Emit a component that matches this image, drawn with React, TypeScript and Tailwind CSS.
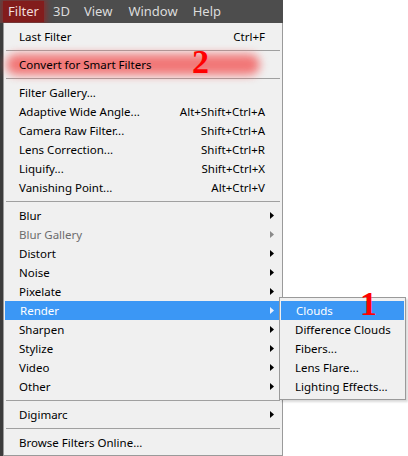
import React from "react";

type Item =
  | { sep: true }
  | { label: string; shortcut?: string; sub?: boolean; disabled?: boolean; active?: boolean; glow?: boolean };

const items: Item[] = [
  { label: "Last Filter", shortcut: "Ctrl+F" },
  { sep: true },
  { label: "Convert for Smart Filters", glow: true },
  { sep: true },
  { label: "Filter Gallery..." },
  { label: "Adaptive Wide Angle...", shortcut: "Alt+Shift+Ctrl+A" },
  { label: "Camera Raw Filter...", shortcut: "Shift+Ctrl+A" },
  { label: "Lens Correction...", shortcut: "Shift+Ctrl+R" },
  { label: "Liquify...", shortcut: "Shift+Ctrl+X" },
  { label: "Vanishing Point...", shortcut: "Alt+Ctrl+V" },
  { sep: true },
  { label: "Blur", sub: true },
  { label: "Blur Gallery", sub: true, disabled: true },
  { label: "Distort", sub: true },
  { label: "Noise", sub: true },
  { label: "Pixelate", sub: true },
  { label: "Render", sub: true, active: true },
  { label: "Sharpen", sub: true },
  { label: "Stylize", sub: true },
  { label: "Video", sub: true },
  { label: "Other", sub: true },
  { sep: true },
  { label: "Digimarc", sub: true },
  { sep: true },
  { label: "Browse Filters Online..." },
];

const subItems = ["Clouds", "Difference Clouds", "Fibers...", "Lens Flare...", "Lighting Effects..."];

function Arrow({ color }: { color: string }) {
  return (
    <svg width="4" height="7" viewBox="0 0 4 7" className="absolute right-[8px] top-[6px]">
      <path d="M0 0 L4 3.5 L0 7 Z" fill={color} />
    </svg>
  );
}

export default function App() {
  return (
    <div
      className="relative h-[456px] w-[408px] overflow-hidden bg-white text-[11.5px] text-black"
      style={{ fontFamily: '"Noto Sans", "Open Sans", sans-serif' }}
    >
      <div className="flex w-[283px] flex-col">
        {/* menu bar */}
        <div className="flex h-[23px] items-center bg-[#4d4d4d] text-[13px] text-[#dcdcdc]">
          <div className="ml-[3px] flex h-[21px] w-[41px] items-center justify-center bg-[#821c1c] text-[#f0dcdc] shadow-[0_0_6px_2px_rgba(160,30,30,0.7)]">
            Filter
          </div>
          <span className="ml-[9px]">3D</span>
          <span className="ml-[14px]">View</span>
          <span className="ml-[16px]">Window</span>
          <span className="ml-[15px]">Help</span>
        </div>
        <div className="flex">
          <div className="w-[3px] bg-[#3c3c3c]" />
          {/* menu */}
          <div className="w-[280px] border border-t-0 border-[#9a9a9a] bg-[#f0f0f0] pb-[3px] pt-[4px]">
            {items.map((it, i) =>
              "sep" in it ? (
                <div key={i} className="my-[4px] ml-[2px] mr-[2px] h-[1px] bg-[#a0a0a0]" />
              ) : (
                <div
                  key={i}
                  className={
                    "relative flex h-[19px] items-center pl-[15px] pr-[17px] " +
                    (it.active ? "ml-[1px] bg-[#3b97f5] text-white" : "") +
                    (it.disabled ? " text-[#6d6d6d]" : "")
                  }
                >
                  {it.glow && (
                    <div className="absolute left-[2px] right-[22px] top-[-1px] h-[21px] rounded-full bg-[#f26a6a] opacity-90 blur-[5px]" />
                  )}
                  <span className="relative">{it.label}</span>
                  {it.shortcut && <span className="relative ml-auto">{it.shortcut}</span>}
                  {it.sub && <Arrow color={it.disabled ? "#8a8a8a" : it.active ? "#e8f0ff" : "#000"} />}
                </div>
              )
            )}
          </div>
        </div>
        <div className="h-[4px] bg-black" />
      </div>

      {/* submenu */}
      <div className="absolute left-[279px] top-[297px] w-[127px] border border-[#9a9a9a] bg-[#f0f0f0] py-[3px] shadow-[2px_2px_2px_rgba(0,0,0,0.15)]">
        {subItems.map((s, i) => (
          <div
            key={s}
            className={
              "flex h-[19px] items-center pl-[15px] " + (i === 0 ? "mx-[1px] bg-[#3b97f5] text-white" : "")
            }
          >
            {s}
          </div>
        ))}
      </div>

      {/* annotations */}
      <div
        className="absolute left-[192px] top-[45px] text-[34px] font-bold leading-none text-[#ff0000]"
        style={{ fontFamily: '"Liberation Serif", serif' }}
      >
        2
      </div>
      <div
        className="absolute left-[360px] top-[287px] text-[34px] font-bold leading-none text-[#ff0000]"
        style={{ fontFamily: '"Liberation Serif", serif' }}
      >
        1
      </div>
    </div>
  );
}
